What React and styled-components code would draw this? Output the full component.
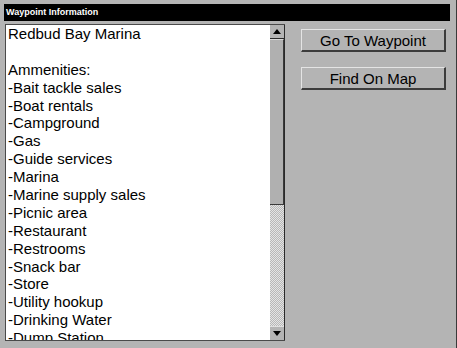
import React from "react";
import styled, { createGlobalStyle } from "styled-components";

const GlobalStyle = createGlobalStyle`
  body {
    margin: 0;
    background: #b4b4b4;
    font-family: "Liberation Sans", Arial, sans-serif;
  }
`;

const Screen = styled.div`
  width: 457px;
  height: 348px;
  box-sizing: border-box;
  background: #b4b4b4;
  padding: 4px 2px 0 4px;
  border-right: 1px solid #3a3a3a;
  display: flex;
  flex-direction: column;
  overflow: hidden;
`;

const TitleBar = styled.div`
  height: 17px;
  margin-right: 4px;
  background: #000;
  color: #fff;
  font-weight: bold;
  font-size: 9px;
  line-height: 17px;
  padding-left: 2px;
`;

const Body = styled.div`
  display: flex;
  padding-top: 3px;
`;

const ListBox = styled.div`
  display: flex;
  width: 280px;
  height: 317px;
  margin-left: 1px;
  border: 1px solid #4a4a4a;
  border-right: none;
  box-sizing: border-box;
`;

const TextArea = styled.div`
  flex: 1;
  background: #fff;
  padding-left: 2px;
  overflow: hidden;
`;

const Line = styled.div`
  font-size: 15px;
  line-height: 17.9px;
  height: 17.9px;
  color: #000;
  white-space: nowrap;
`;

const ScrollBar = styled.div`
  width: 14px;
  display: flex;
  flex-direction: column;
  background: #b4b4b4;
  border-right: 1px solid #2a2a2a;
`;

const Arrow = styled.div`
  height: 14px;
  flex-shrink: 0;
  display: flex;
  align-items: center;
  justify-content: center;
  border-bottom: ${(p) => (p.$top ? "1px solid #2a2a2a" : "none")};
  border-top: ${(p) => (p.$top ? "none" : "1px solid #e0e0e0")};
  box-sizing: border-box;
`;

const Thumb = styled.div`
  height: 166px;
  flex-shrink: 0;
  background: #b0b0b0;
  border-right: 1px solid #3a3a3a;
  border-bottom: 1px solid #3a3a3a;
  border-top: 1px solid #d8d8d8;
  box-sizing: border-box;
`;

const Track = styled.div`
  flex: 1;
  background: repeating-conic-gradient(#e4e4e4 0 25%, #b8b8b8 0 50%) 0 0 / 2px 2px;
`;

const Side = styled.div`
  display: flex;
  flex-direction: column;
  gap: 15px;
  padding: 5px 0 0 16px;
`;

const Button = styled.button`
  width: 145px;
  height: 23px;
  background: #b4b4b4;
  border-top: 1px solid #e4e4e4;
  border-left: 1px solid #e4e4e4;
  border-right: 2px solid #3c3c3c;
  border-bottom: 2px solid #3c3c3c;
  font-family: "Liberation Sans", Arial, sans-serif;
  font-size: 15px;
  color: #000;
  padding: 0;
  line-height: 19px;
`;

const lines = [
  "Redbud Bay Marina",
  "",
  "Ammenities:",
  "-Bait tackle sales",
  "-Boat rentals",
  "-Campground",
  "-Gas",
  "-Guide services",
  "-Marina",
  "-Marine supply sales",
  "-Picnic area",
  "-Restaurant",
  "-Restrooms",
  "-Snack bar",
  "-Store",
  "-Utility hookup",
  "-Drinking Water",
  "-Dump Station",
];

const Tri = ({ up }) => (
  <svg width="8" height="5" viewBox="0 0 8 5">
    <polygon points={up ? "4,0 8,5 0,5" : "0,0 8,0 4,5"} fill="#000" />
  </svg>
);

export default function App() {
  return (
    <>
      <GlobalStyle />
      <Screen>
        <TitleBar>Waypoint Information</TitleBar>
        <Body>
          <ListBox>
            <TextArea>
              {lines.map((l, i) => (
                <Line key={i}>{l || "\u00a0"}</Line>
              ))}
            </TextArea>
            <ScrollBar>
              <Arrow $top>
                <Tri up />
              </Arrow>
              <Thumb />
              <Track />
              <Arrow>
                <Tri />
              </Arrow>
            </ScrollBar>
          </ListBox>
          <Side>
            <Button>Go To Waypoint</Button>
            <Button>Find On Map</Button>
          </Side>
        </Body>
      </Screen>
    </>
  );
}
